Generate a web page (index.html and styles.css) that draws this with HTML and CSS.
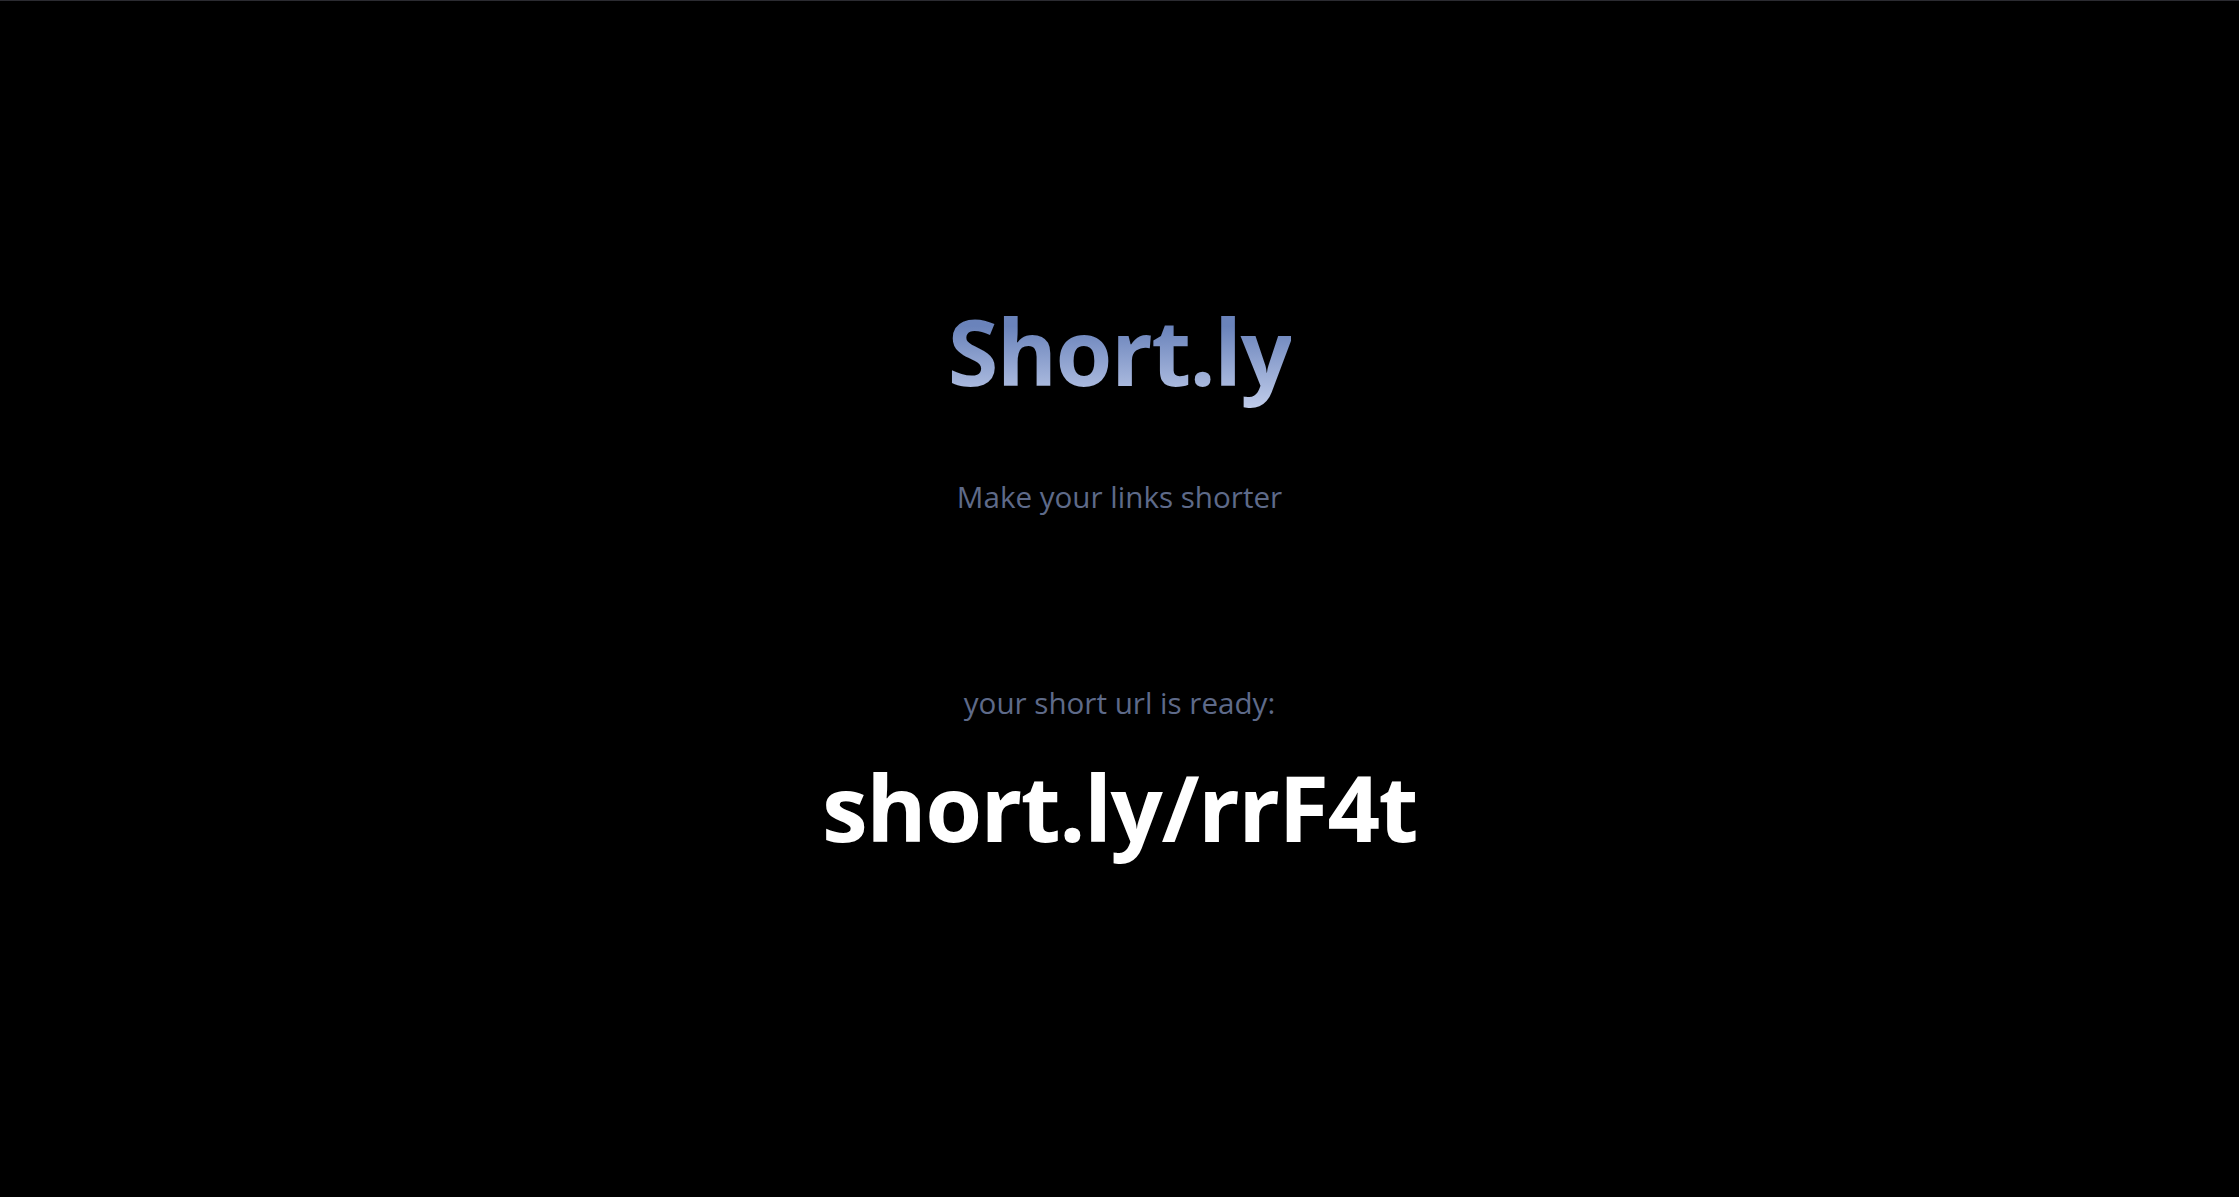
FILE: index.html
```html
<!DOCTYPE html>
<html lang="en">
<head>
<meta charset="utf-8">
<title>Short.ly</title>
<link rel="stylesheet" href="styles.css">
</head>
<body>
<main class="page">
  <header class="hero">
    <h1 class="logo">Short.ly</h1>
    <p class="tagline">Make your links shorter</p>
  </header>
  <section class="result">
    <p class="result-label">your short url is ready:</p>
    <p class="result-url">short.ly/rrF4t</p>
  </section>
</main>
</body>
</html>
```

FILE: styles.css
```css
html, body {
  margin: 0;
  padding: 0;
  background: #000;
  height: 100%;
}
body {
  border-top: 1px solid #2b2b31;
  box-sizing: border-box;
  font-family: "Open Sans", "Noto Sans", sans-serif;
}
.page {
  display: flex;
  flex-direction: column;
  align-items: center;
}
.hero {
  display: flex;
  flex-direction: column;
  align-items: center;
  padding-top: 304px;
}
.logo {
  margin: 0;
  font-size: 92px;
  font-weight: 700;
  line-height: 1;
  letter-spacing: -1.6px;
  background: linear-gradient(180deg, #6a83bb 20%, #c3cfec 100%);
  -webkit-background-clip: text;
  background-clip: text;
  color: transparent;
  padding-bottom: 14px;
}
.tagline {
  margin: 71px 0 0;
  font-size: 29.6px;
  line-height: 1;
  color: #5e6a89;
}
.result {
  display: flex;
  flex-direction: column;
  align-items: center;
  margin-top: 176px;
}
.result-label {
  margin: 0;
  font-size: 29.6px;
  line-height: 1;
  color: #5e6a89;
}
.result-url {
  margin: 44px 0 0;
  font-size: 92px;
  font-weight: 700;
  line-height: 1;
  letter-spacing: -1.5px;
  color: #fff;
}
```
